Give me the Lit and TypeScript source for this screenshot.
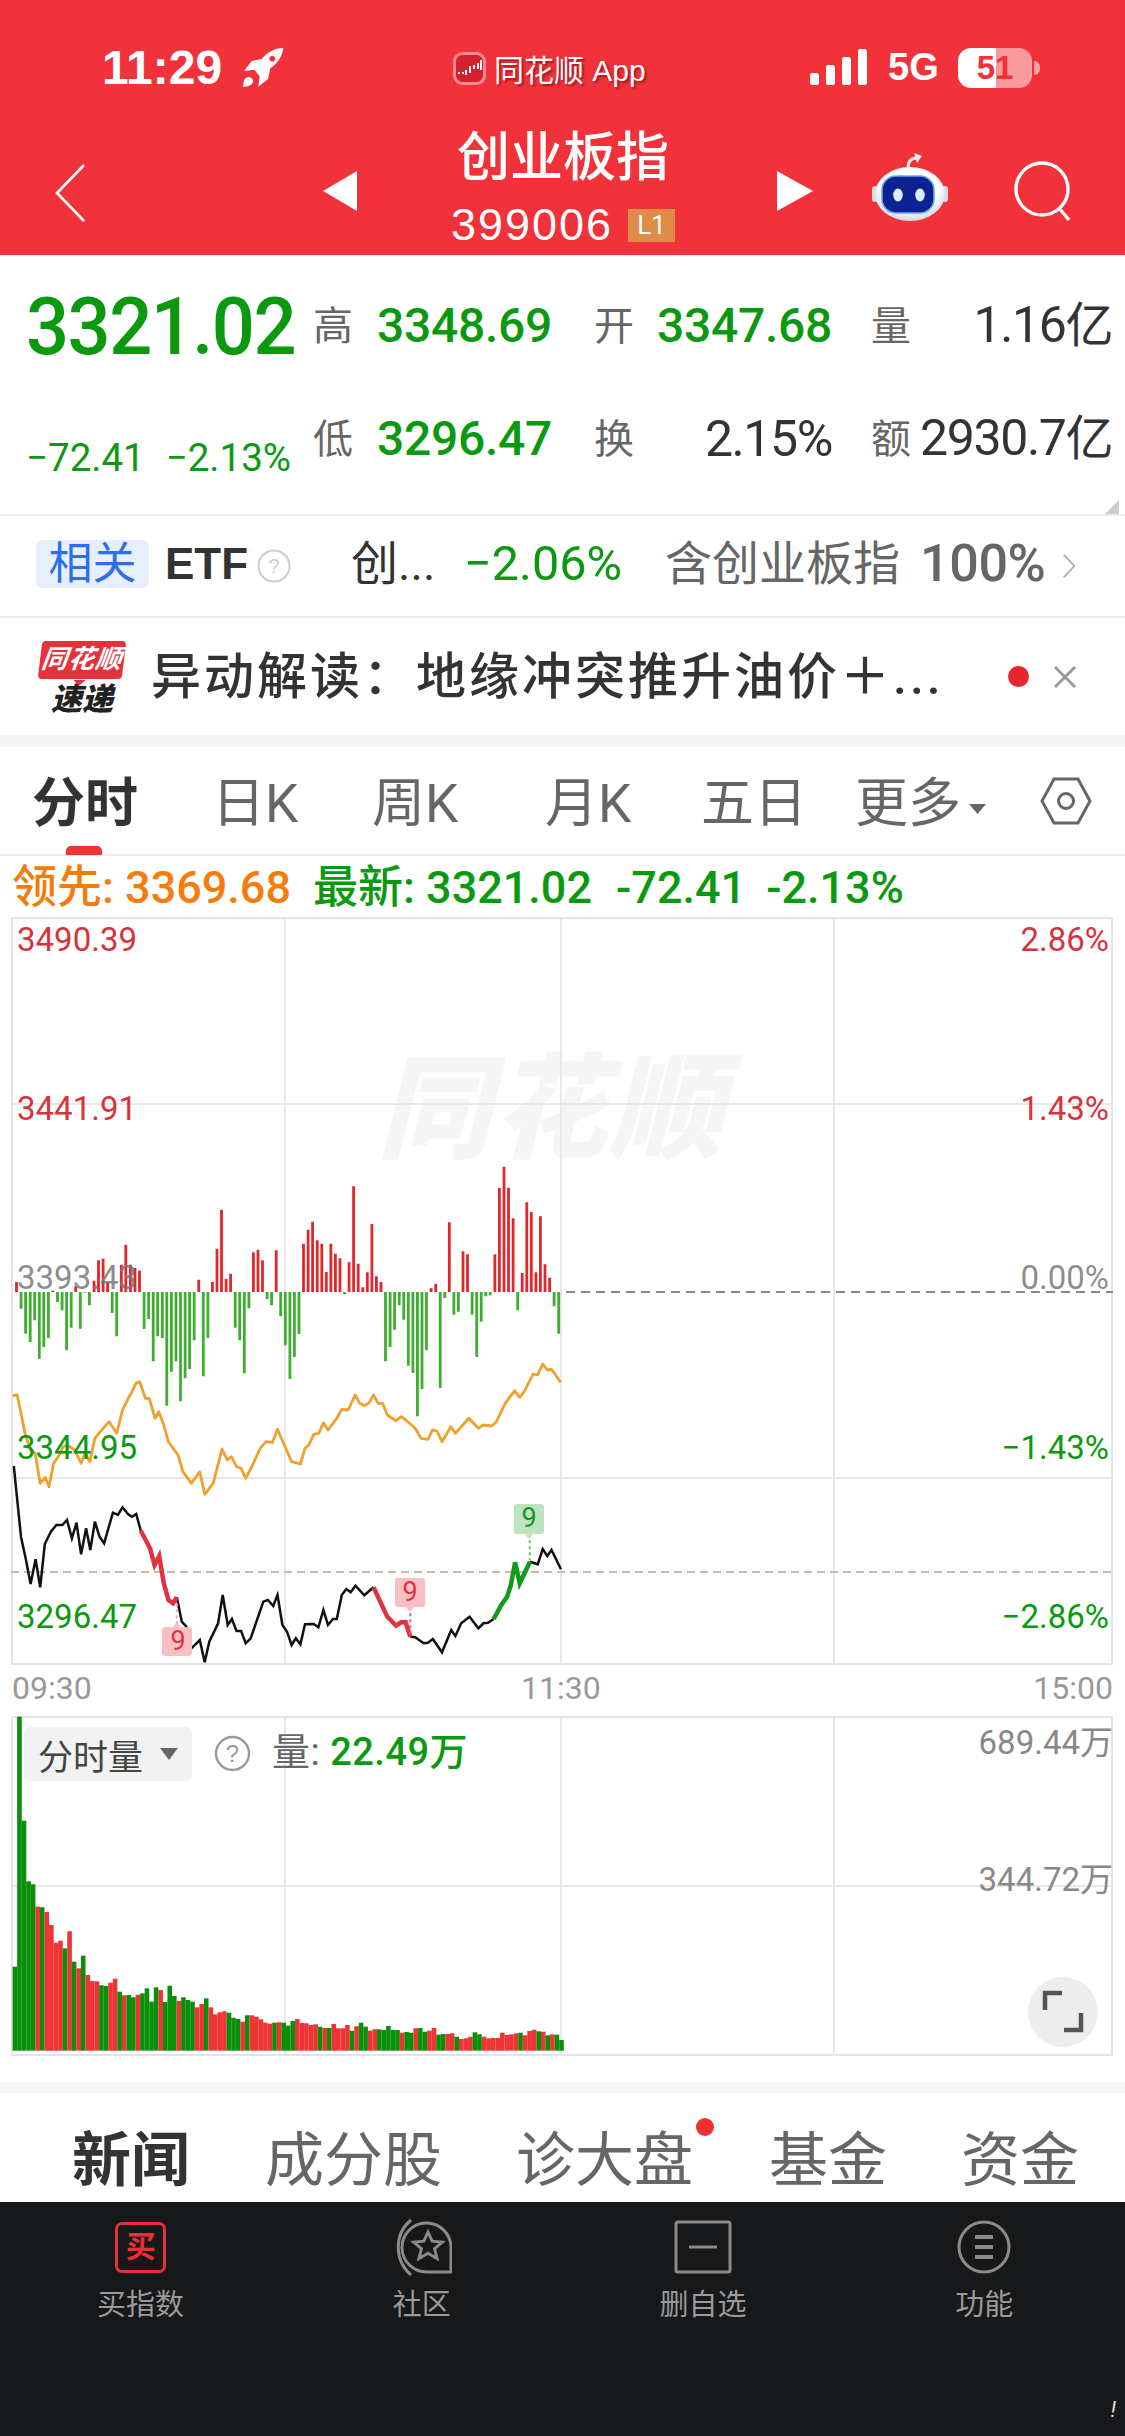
import { LitElement, html, css, svg } from 'lit';
import { customElement } from 'lit/decorators.js';

// all chart data below was read off the reference, in px of the crop (x / 2.613, y / 3)
const ticks = [30,-50,-125,-150,-85,-200,-165,-138,4,-30,-55,-175,-107,17,-110,-2,-40,34,95,100,30,-63,-133,82,142,82,72,64,-111,-81,-208,-133,-138,-341,-239,-208,-328,-259,-231,-145,37,-253,-138,30,130,247,39,55,-107,-145,-244,-49,119,127,95,-21,-40,125,-73,-160,-261,-195,-126,145,187,211,155,145,60,145,115,101,-6,89,317,85,14,59,204,47,30,-208,-165,-113,-40,-83,-221,-243,-373,-291,-175,11,25,-288,-18,209,-68,-59,122,113,-68,-195,-89,-13,-10,113,312,376,313,221,-55,57,269,240,59,227,83,43,-43,-125];

const volG = 'g', volR = 'r';
const vols: [string, number][] = [[volG,800],[volG,50],[volG,362],[volG,544],[volG,553],[volR,620],[volG,622],[volR,636],[volR,675],[volR,728],[volR,722],[volG,745],[volR,694],[volG,785],[volR,805],[volG,767],[volR,825],[volR,843],[volR,844],[volG,856],[volG,858],[volR,848],[volR,836],[volG,875],[volR,886],[volG,885],[volG,892],[volR,884],[volG,880],[volG,865],[volG,905],[volG,862],[volR,870],[volG,906],[volG,857],[volG,888],[volR,903],[volG,892],[volG,900],[volG,905],[volR,922],[volR,912],[volG,895],[volR,922],[volR,943],[volR,937],[volR,934],[volG,938],[volG,953],[volG,957],[volR,965],[volG,946],[volR,946],[volR,950],[volR,958],[volR,968],[volR,971],[volG,968],[volR,967],[volG,968],[volG,977],[volG,963],[volR,957],[volR,969],[volR,970],[volR,975],[volR,973],[volG,980],[volR,984],[volG,984],[volR,972],[volR,985],[volR,985],[volR,975],[volG,992],[volR,979],[volG,968],[volG,980],[volR,992],[volR,988],[volG,988],[volG,990],[volG,978],[volG,990],[volG,990],[volR,998],[volG,996],[volG,998],[volR,985],[volG,984],[volG,995],[volR,992],[volR,984],[volG,1004],[volG,1002],[volR,1002],[volR,1000],[volG,1010],[volR,1017],[volR,1015],[volR,1010],[volG,997],[volG,1003],[volR,1010],[volR,1015],[volR,1014],[volR,1014],[volR,998],[volR,1005],[volR,1003],[volR,1000],[volG,998],[volR,1006],[volR,993],[volR,989],[volG,994],[volR,995],[volG,1006],[volR,1003],[volG,1004],[volG,1020]];

const avgLine = [[33,-13],[45,-15],[55,40],[65,100],[80,150],[92,160],[105,250],[118,232],[128,260],[140,190],[155,165],[165,140],[175,135],[195,150],[212,190],[222,160],[235,185],[248,115],[262,95],[285,65],[305,100],[320,30],[335,-5],[345,-25],[355,-50],[365,-55],[380,-5],[390,-5],[405,55],[415,35],[428,75],[440,125],[465,165],[478,215],[500,250],[522,215],[535,283],[557,250],[580,147],[594,180],[605,170],[618,200],[630,205],[642,235],[660,195],[680,145],[695,125],[712,127],[725,88],[745,140],[762,185],[785,192],[797,145],[807,135],[820,103],[833,100],[845,68],[857,90],[880,55],[893,28],[910,30],[928,-15],[940,10],[953,17],[965,8],[976,-15],[988,10],[1000,10],[1012,45],[1035,62],[1048,50],[1060,60],[1085,85],[1100,115],[1118,118],[1130,90],[1142,93],[1155,125],[1178,80],[1190,100],[1225,55],[1250,85],[1262,75],[1285,78],[1297,65],[1320,10],[1345,-28],[1358,-8],[1370,-25],[1393,-78],[1405,-75],[1418,-108],[1430,-90],[1441,-92],[1465,-53]];

const priceA = [[36,198],[55,410],[68,480],[80,552],[93,478],[105,562],[117,432],[133,395],[147,375],[163,375],[175,360],[188,415],[200,368],[212,463],[225,385],[236,450],[248,365],[260,410],[272,430],[295,338],[308,345],[320,322],[335,343],[345,350],[356,342],[368,392]];
const priceDown1 = [[368,392],[392,445],[404,495],[416,468],[428,550],[440,600],[452,610],[462,592]];
const priceB = [[462,592],[475,665],[487,680],[500,745],[522,720],[535,787],[547,725],[570,670],[582,585],[595,675],[606,657],[618,693],[630,693],[642,730],[655,715],[688,605],[700,600],[714,618],[725,585],[738,675],[750,695],[762,735],[773,715],[785,733],[797,673],[820,672],[832,682],[845,630],[857,675],[870,657],[880,657],[893,585],[905,567],[916,577],[929,557],[952,586],[976,562]];
const priceDown2 = [[976,562],[1012,650],[1035,677],[1048,667],[1060,667],[1072,710]];
const priceC = [[1072,710],[1085,712],[1107,730],[1118,728],[1131,717],[1155,757],[1179,690],[1190,708],[1205,670],[1227,650],[1250,685],[1263,670],[1275,668],[1290,657]];
const priceUp = [[1290,657],[1310,615],[1325,590],[1335,555],[1346,487],[1358,550],[1385,485]];
const priceD = [[1385,485],[1405,493],[1418,447],[1430,468],[1441,450],[1466,508]];

const sx = (x: number) => +(x / 2.613 - 11).toFixed(1);
const sy = (y: number) => +(y / 3 + 483).toFixed(1);
const pts = (a: number[][]) => a.map(p => `${sx(p[0])},${sy(p[1])}`).join(' ');

const tickPath = (up: boolean) =>
  ticks.map((v, i) => ((v > 0) === up ? `M${(5.5 + 4.556 * i).toFixed(1)} 375V${(375 - v / 3).toFixed(1)}` : '')).join('');

const priceLabels = [
  { t: '3490.39', c: 'red', y: 23 }, { t: '3441.91', c: 'red', y: 192 },
  { t: '3393.43', c: 'flat', y: 361 }, { t: '3344.95', c: 'green', y: 531 },
  { t: '3296.47', c: 'green', y: 700 },
];
const pctLabels = [
  { t: '2.86%', c: 'red', y: 23 }, { t: '1.43%', c: 'red', y: 192 },
  { t: '0.00%', c: 'flat', y: 361 }, { t: '−1.43%', c: 'green', y: 531 },
  { t: '−2.86%', c: 'green', y: 700 },
];
const nines = [
  { c: 'red', x: 152, y: 710 }, { c: 'red', x: 384, y: 661 }, { c: 'green', x: 503, y: 587 },
];

@customElement('app-root')
export class AppRoot extends LitElement {
  static styles = css`
    :host {
      display: block;
      width: 1125px;
      height: 2436px;
      overflow: hidden;
      background: #fff;
      font-family: Roboto, "Noto Sans CJK SC", sans-serif;
      color: #333;
    }
    .header { height: 255px; background: #f1323a; color: #fff; display: flex; flex-direction: column; }
    .status { height: 128px; display: flex; align-items: flex-start; padding-top: 46px; box-sizing: border-box; }
    .time { font: 700 48px "Liberation Sans", sans-serif; margin-left: 102px; width: 141px; line-height: 44px; }
    .rocket { width: 41px; height: 41px; display: block; margin-top: 1px; }
    .app { display: flex; align-items: center; margin-left: 169px; height: 44px; width: 357px; }
    .app-logo { width: 33px; height: 33px; display: block; }
    .app-name { margin-left: 8px; font-size: 30px; font-family: "Liberation Sans", "Noto Sans CJK SC", sans-serif; text-shadow: 2px 2px 2px rgba(110, 0, 10, 0.55); white-space: nowrap; }
    .signal { width: 58px; height: 36px; display: block; margin-top: 3px; }
    .net { font: 700 38px "Liberation Sans", sans-serif; margin-left: 20px; width: 70px; line-height: 42px; }
    .battery {
      width: 74px; height: 40px; border-radius: 13px; margin-top: 2px;
      background: linear-gradient(90deg, #fff 51%, rgba(255, 255, 255, 0.5) 51%);
      color: #f1323a; font: 700 33px "Liberation Sans", sans-serif; text-align: center; line-height: 40px;
    }
    .tip { width: 6px; height: 14px; margin: 15px 0 0 2px; border-radius: 0 6px 6px 0; background: rgba(255, 255, 255, 0.55); }

    .nav { display: flex; align-items: flex-start; }
    .back { width: 34px; height: 60px; margin: 35px 0 0 54px; display: block; }
    .prev { width: 34px; height: 40px; margin: 43px 0 0 235px; display: block; }
    .title { width: 412px; display: flex; flex-direction: column; align-items: center; }
    .name { font-size: 53px; font-weight: 500; line-height: 56px; margin-top: 2px; }
    .code-row { display: flex; align-items: center; margin-top: 22px; height: 34px; }
    .code { font-size: 45px; letter-spacing: 2px; font-family: "Liberation Sans", sans-serif; }
    .level { width: 47px; height: 33px; margin-left: 15px; background: #e08c48; font-size: 26px; text-align: center; line-height: 33px; }
    .next { width: 36px; height: 40px; margin: 43px 0 0 8px; display: block; }
    .robot { width: 100px; height: 85px; margin: 22px 0 0 47px; display: block; }
    .search { width: 62px; height: 62px; margin: 32px 0 0 52px; display: block; }

    .quote {
      position: relative; height: 259px; box-sizing: border-box; padding: 13px 0 20px 27px;
      display: grid; grid-template-columns: 286px 40px 199px 82px 198px 79px 201px; grid-template-rows: 113px 113px;
      align-items: center;
    }
    .last { font-size: 79px; font-weight: 500; color: #0b990f; letter-spacing: -1.6px; line-height: 80px; transform: scaleX(0.96); transform-origin: left center; margin-top: 4px; margin-left: -1px; }
    .delta { align-self: end; display: flex; gap: 21px; font-size: 38.5px; color: #0b990f; padding-bottom: 18px; line-height: 36px; white-space: nowrap; margin-left: -1px; }
    .lab { font-size: 40px; color: #666; text-align: right; line-height: 48px; margin-top: 4px; }
    .val { font-size: 48px; font-weight: 500; color: #0b990f; text-align: right; line-height: 52px; letter-spacing: -0.3px; margin-top: 2px; }
    .val.dark { color: #333; font-weight: 400; font-size: 50px; letter-spacing: -1.4px; }
    .val.dark span { font-size: 48px; }
    .corner { position: absolute; right: 6px; bottom: 0; width: 14px; height: 14px; background: #ccc; clip-path: polygon(100% 0, 100% 100%, 0 100%); }

    .etf { height: 102px; box-sizing: border-box; border-top: 2px solid #eee; display: flex; align-items: center; padding-left: 36px; font-size: 47px; line-height: 56px; color: #666; }
    .etf div { margin-top: -4px; }
    .rel { width: 113px; height: 48px; background: #e8effc; color: #2c6fe8; border-radius: 6px; font-size: 44px; text-align: center; line-height: 48px; }
    .etf-name { color: #333; font-weight: 700; font-size: 44px; margin-left: 16px; font-family: "Liberation Sans", sans-serif; }
    .help { width: 34px; height: 34px; margin-left: 9px; display: block; }
    .fund { color: #333; margin-left: 60px; width: 113px; white-space: nowrap; font-size: 47px; }
    .fund-pct { color: #0b990f; font-size: 48.5px; width: 201px; white-space: nowrap; }
    .hold { white-space: nowrap; width: 255px; }
    .hold-pct { font-size: 52px; font-weight: 500; width: 142px; letter-spacing: -0.4px; }
    .more { width: 14px; height: 28px; display: block; }

    .flash { height: 119px; box-sizing: border-box; border-top: 2px solid #eee; display: flex; align-items: center; padding-left: 37px; }
    .speed { width: 90px; display: flex; flex-direction: column; align-items: center; margin-top: 4px; }
    .speed-top {
      position: relative; width: 84px; height: 38px; background: #e4323a; border-radius: 4px; transform: skewX(-7deg);
      color: #fff; font-size: 26px; font-weight: 700; font-style: italic; line-height: 37px; text-align: center; letter-spacing: 1px;
    }
    .speed-top::after { content: ""; position: absolute; left: 36px; bottom: -7px; border: 6px solid transparent; border-top-color: #e4323a; border-bottom: 0; }
    .speed-bot { font-size: 31px; font-weight: 900; font-style: italic; color: #222; line-height: 32px; margin-top: 5px; }
    .flash-text { font-size: 50px; letter-spacing: 3px; color: #333; font-weight: 500; margin-left: 24px; width: 857px; white-space: nowrap; line-height: 60px; }
    .dot { width: 21px; height: 21px; border-radius: 50%; background: #e9252e; }
    .close { width: 24px; height: 24px; margin-left: 24px; display: block; }

    .band { height: 12px; background: #f5f5f5; }
    .band.thin { height: 11px; }
    .tabs {
      height: 109px; box-sizing: border-box; border-bottom: 2px solid #eee; position: relative; padding: 27px 0 0 32px;
      display: grid; grid-template-columns: 180px 160px 173px 156px 154px 185px auto; font-size: 53px; line-height: 60px; color: #666; align-items: start;
    }
    .tabs .on { color: #333; font-weight: 700; }
    .tabs .caret { display: inline-block; width: 17px; height: 10px; margin-left: 8px; vertical-align: 8px; background: #666; clip-path: polygon(0 0, 100% 0, 50% 100%); }
    .hex { width: 52px; height: 48px; display: block; margin-top: 3px; }
    .underline { position: absolute; left: 66px; bottom: -1px; width: 36px; height: 9px; background: #ee3333; border-radius: 5px 5px 0 0; }

    .info { height: 61px; display: flex; align-items: baseline; padding: 7px 0 0 12px; box-sizing: border-box; font-size: 45px; line-height: 50px; font-weight: 500; white-space: nowrap; }
    .lead { color: #f57c0a; margin-right: 22px; }
    .now { color: #0b990f; margin-right: 24px; }
    .now2 { color: #0b990f; margin-right: 20px; }

    .frame { position: relative; margin-left: 11px; width: 1102px; height: 748px; }
    .frame svg, .vol svg { display: block; }
    .plot { position: absolute; left: 0; top: 0; }
    .wm { position: absolute; left: 366px; top: 133px; font-size: 114px; font-weight: 900; font-style: italic; color: #f5f5f5; letter-spacing: 2px; line-height: 120px; white-space: nowrap; }
    .ax { position: absolute; font-size: 33px; line-height: 36px; }
    .ax.l { left: 6px; }
    .ax.r { right: 4px; }
    .red { color: #d8323c; }
    .green { color: #0b990f; }
    .flat { color: rgba(120, 120, 120, 0.85); }
    .nine { position: absolute; width: 30px; height: 29px; text-align: center; font-size: 27px; line-height: 29px; }
    .nine.red { color: #e0333f; }
    .nine.green { color: #129a1c; }
    .hours { height: 51px; display: flex; justify-content: space-between; align-items: center; box-sizing: border-box; padding: 0 12px 6px 12px; font-size: 32px; color: #999; position: relative; }
    .hours .mid { position: absolute; left: 521px; }

    .vol { position: relative; margin-left: 11px; width: 1102px; height: 340px; }
    .pill { position: absolute; left: 13px; top: 11px; width: 168px; height: 54px; box-sizing: border-box; padding-left: 14px; background: #f2f2f2; border-radius: 6px; display: flex; align-items: center; font-size: 35px; color: #444; }
    .pill i { width: 18px; height: 12px; margin-left: 17px; background: #666; clip-path: polygon(0 0, 100% 0, 50% 100%); }
    .help2 { position: absolute; left: 203px; top: 19px; width: 37px; height: 37px; }
    .vol-now { position: absolute; left: 261px; top: 15px; font-size: 38px; line-height: 42px; color: #666; white-space: nowrap; letter-spacing: 0.5px; }
    .vol-now b { color: #0b990f; font-weight: 500; }
    .vol-ax { position: absolute; right: 0; font-size: 33px; line-height: 38px; color: #888; }
    .expand { position: absolute; left: 1017px; top: 261px; width: 70px; height: 70px; border-radius: 50%; background: #ededed; }
    .expand svg { width: 70px; height: 70px; }

    .gap { height: 26px; }
    .news { height: 109px; display: grid; grid-template-columns: 193px 251px 253px 192px auto; padding: 35px 0 0 72px; box-sizing: border-box; font-size: 59px; line-height: 66px; color: #666; position: relative; }
    .news .on { color: #333; font-weight: 700; }
    .news-dot { position: absolute; left: 696px; top: 25px; width: 18px; height: 18px; border-radius: 50%; background: #ee3030; }

    .bar { height: 234px; background: #171819; position: relative; display: grid; grid-template-columns: repeat(4, 1fr); padding-top: 16px; box-sizing: border-box; align-items: start; }
    .item { display: flex; flex-direction: column; align-items: center; color: #9a9a9a; font-size: 29px; }
    .item svg { display: block; width: 60px; height: 60px; }
    .item span { margin-top: 7px; line-height: 40px; }
    .buy { width: 51px; height: 51px; box-sizing: border-box; margin: 4px 0 5px; border: 3px solid #e8303a; border-radius: 7px; color: #e8303a; font-size: 30px; font-weight: 700; line-height: 44px; text-align: center; }
    .mark { position: absolute; right: 9px; bottom: 14px; color: #ddd; font-size: 22px; font-style: italic; }
  `;

  renderChart() {
    const cols = [274, 550, 823];
    return html`<svg class="plot" width="1102" height="748" viewBox="0 0 1102 748" fill="none">
      ${cols.map(x => svg`<line x1=${x} x2=${x} y1="0" y2="748" stroke="#e8e8e8" stroke-width="2"></line>`)}
      ${[187, 561].map(y => svg`<line x1="0" x2="1102" y1=${y} y2=${y} stroke="#e8e8e8" stroke-width="2"></line>`)}
      <rect x="1" y="1" width="1100" height="746" stroke="#e4e4e4" stroke-width="2"></rect>
      <line x1="555" x2="1102" y1="375" y2="375" stroke="#8a8a8a" stroke-width="2" stroke-dasharray="9 6"></line>
      <line x1="0" x2="1102" y1="655" y2="655" stroke="#cdbc9f" stroke-width="2" stroke-dasharray="8 5"></line>
      <path d=${tickPath(true)} stroke="#e2262b" stroke-width="2.8"></path>
      <path d=${tickPath(false)} stroke="#3fad30" stroke-width="2.8"></path>
      <polyline points=${pts(avgLine)} stroke="#f0a02c" stroke-width="2.8" stroke-linejoin="round"></polyline>
      <polyline points=${pts(priceA)} stroke="#111" stroke-width="2.5"></polyline>
      <polyline points=${pts(priceB)} stroke="#111" stroke-width="2.5"></polyline>
      <polyline points=${pts(priceC)} stroke="#111" stroke-width="2.5"></polyline>
      <polyline points=${pts(priceD)} stroke="#111" stroke-width="2.5"></polyline>
      <polyline points=${pts(priceDown1)} stroke="#e0333f" stroke-width="4.5"></polyline>
      <polyline points=${pts(priceDown2)} stroke="#e0333f" stroke-width="4.5"></polyline>
      <polyline points=${pts(priceUp)} stroke="#129a1c" stroke-width="4.5"></polyline>
      <line x1=${sx(462)} x2=${sx(462)} y1=${sy(610)} y2=${sy(682)} stroke="#f4aab0" stroke-width="2" stroke-dasharray="3 3"></line>
      <line x1=${sx(1072)} x2=${sx(1072)} y1=${sy(622)} y2=${sy(710)} stroke="#e8606a" stroke-width="2" stroke-dasharray="3 3"></line>
      <line x1=${sx(1384)} x2=${sx(1384)} y1=${sy(403)} y2=${sy(480)} stroke="#6fc07a" stroke-width="2" stroke-dasharray="3 3"></line>
      <path d="M155 710h8l4-5 4 5h8q3 0 3 3v23q0 3-3 3h-24q-3 0-3-3v-23q0-3 3-3z" transform="translate(-1 0)" fill="#f8c0c4"></path>
      <path d="M387 661h24q3 0 3 3v23q0 3-3 3h-8l-4 5-4-5h-8q-3 0-3-3v-23q0-3 3-3z" fill="#f8c0c4"></path>
      <path d="M506 587h24q3 0 3 3v24q0 3-3 3h-8l-4 5-4-5h-8q-3 0-3-3v-24q0-3 3-3z" fill="#bde3c0"></path>
    </svg>`;
  }

  renderVolume() {
    const base = 1052 / 3 - 16;
    return html`<svg class="plot" width="1102" height="340" viewBox="0 0 1102 340" fill="none">
      ${[274, 550, 823].map(x => svg`<line x1=${x} x2=${x} y1="0" y2="339" stroke="#e8e8e8" stroke-width="2"></line>`)}
      <line x1="0" x2="1102" y1="170" y2="170" stroke="#e8e8e8" stroke-width="2"></line>
      <rect x="1" y="1" width="1100" height="338" stroke="#e4e4e4" stroke-width="2"></rect>
      ${vols.map(([c, top], i) => {
        const y = top / 3 - 16;
        return svg`<rect x=${(1.6 + 4.555 * i).toFixed(2)} y=${y.toFixed(1)} width="4.6" height=${(base - y).toFixed(1)} fill=${c === volG ? '#0a8f0a' : '#ee3434'}></rect>`;
      })}
    </svg>`;
  }

  render() {
    return html`
      <div class="header">
        <div class="status">
          <div class="time">11:29</div>
          <svg class="rocket" viewBox="22 20 123 123">
            <path fill="#fff" fill-rule="evenodd" d="M143 22C118 24 93 36 78 56L48 62 25 92 56 88 72 108 68 139 97 116 104 84C126 68 140 48 143 22ZM110 46a9 9 0 1 0 .1 0Z"></path>
            <path fill="#fff" d="M32 112C22 118 24 128 22 140C36 138 48 136 52 124C54 116 42 106 32 112Z"></path>
          </svg>
          <div class="app">
            <svg class="app-logo" viewBox="0 0 33 33">
              <rect x="1.5" y="1.5" width="30" height="30" rx="8" fill="#d4202a" stroke="#f78a90" stroke-width="3"></rect>
              <path stroke="#fff" stroke-width="2" d="M5 21h2M9 21h2M13 18v5M17 14v7M21 13v4M25 11v6M28 8v10"></path>
            </svg>
            <span class="app-name">同花顺 App</span>
          </div>
          <svg class="signal" viewBox="0 0 58 36">
            <rect x="0" y="24" width="9" height="12" rx="2.5" fill="#fff"></rect>
            <rect x="16" y="16" width="9" height="20" rx="2.5" fill="#fff"></rect>
            <rect x="32" y="8" width="9" height="28" rx="2.5" fill="#fff"></rect>
            <rect x="48" y="0" width="9" height="36" rx="2.5" fill="#fff"></rect>
          </svg>
          <div class="net">5G</div>
          <div class="battery">51</div>
          <div class="tip"></div>
        </div>
        <div class="nav">
          <svg class="back" viewBox="0 0 34 60" fill="none"><path d="M30 2 3 30l27 28" stroke="#fff" stroke-width="2.6"></path></svg>
          <svg class="prev" viewBox="0 0 34 40"><path d="M34 0v40L0 20z" fill="#fff"></path></svg>
          <div class="title">
            <div class="name">创业板指</div>
            <div class="code-row"><span class="code">399006</span><span class="level">L1</span></div>
          </div>
          <svg class="next" viewBox="0 0 36 40"><path d="M0 0v40l36-20z" fill="#fff"></path></svg>
          <svg class="robot" viewBox="0 0 100 85">
            <defs>
              <radialGradient id="head" cx="50%" cy="40%" r="65%"><stop offset="0.6" stop-color="#fff"></stop><stop offset="1" stop-color="#c9ced8"></stop></radialGradient>
            </defs>
            <path d="M48 18c0-7 3-10 9-10" fill="none" stroke="#f4e8e8" stroke-width="3"></path>
            <path d="M54 3l8 3-5 7z" fill="#f4e8e8"></path>
            <rect x="12" y="36" width="6" height="16" rx="3" fill="#d8dbe2"></rect>
            <rect x="82" y="36" width="6" height="16" rx="3" fill="#d8dbe2"></rect>
            <ellipse cx="50" cy="44" rx="35" ry="27" fill="url(#head)"></ellipse>
            <rect x="22" y="26" width="52" height="37" rx="14" fill="#0b2392" stroke="#6aa8ee" stroke-width="1.5"></rect>
            <ellipse cx="38" cy="45" rx="4.8" ry="6.5" fill="#d8eefc"></ellipse>
            <ellipse cx="60" cy="45" rx="4.8" ry="6.5" fill="#d8eefc"></ellipse>
          </svg>
          <svg class="search" viewBox="0 0 62 62" fill="none"><circle cx="30" cy="29" r="26" stroke="#fff" stroke-width="3.4"></circle><path d="M47 48l10 12" stroke="#fff" stroke-width="3.4"></path></svg>
        </div>
      </div>

      <div class="quote">
        <div class="last">3321.02</div>
        <div class="lab">高</div><div class="val">3348.69</div>
        <div class="lab">开</div><div class="val">3347.68</div>
        <div class="lab">量</div><div class="val dark">1.16<span>亿</span></div>
        <div class="delta"><span>−72.41</span><span>−2.13%</span></div>
        <div class="lab">低</div><div class="val">3296.47</div>
        <div class="lab">换</div><div class="val dark">2.15%</div>
        <div class="lab">额</div><div class="val dark">2930.7<span>亿</span></div>
        <div class="corner"></div>
      </div>

      <div class="etf">
        <div class="rel">相关</div>
        <div class="etf-name">ETF</div>
        <svg class="help" viewBox="0 0 34 34" fill="none"><circle cx="17" cy="17" r="15.5" stroke="#ccc" stroke-width="2"></circle><text x="17" y="24" text-anchor="middle" font-size="20" fill="#ccc" font-family="Liberation Sans">?</text></svg>
        <div class="fund">创...</div>
        <div class="fund-pct">−2.06%</div>
        <div class="hold">含创业板指</div>
        <div class="hold-pct">100%</div>
        <svg class="more" viewBox="0 0 16 30" fill="none"><path d="M2 2l12 13L2 28" stroke="#aaa" stroke-width="2"></path></svg>
      </div>

      <div class="flash">
        <div class="speed">
          <div class="speed-top">同花顺</div>
          <div class="speed-bot">速递</div>
        </div>
        <div class="flash-text">异动解读：地缘冲突推升油价＋...</div>
        <div class="dot"></div>
        <svg class="close" viewBox="0 0 24 24" fill="none"><path d="M2 2l20 20M22 2 2 22" stroke="#9a9a9a" stroke-width="3"></path></svg>
      </div>

      <div class="band"></div>

      <div class="tabs">
        <span class="on">分时</span><span>日K</span><span>周K</span><span>月K</span><span>五日</span>
        <span>更多<i class="caret"></i></span>
        <svg class="hex" viewBox="0 0 52 48" fill="none"><path d="M14 2h24l12 22-12 22H14L2 24z" stroke="#666" stroke-width="3"></path><circle cx="26" cy="24" r="7.5" stroke="#666" stroke-width="3"></circle></svg>
        <div class="underline"></div>
      </div>

      <div class="info">
        <span class="lead">领先: 3369.68</span>
        <span class="now">最新: 3321.02</span>
        <span class="now2">-72.41</span>
        <span class="now2">-2.13%</span>
      </div>

      <div class="frame">
        <div class="wm">同花顺</div>
        ${this.renderChart()}
        ${priceLabels.map(l => html`<span class="ax l ${l.c}" style="top:${l.y - 18}px">${l.t}</span>`)}
        ${pctLabels.map(l => html`<span class="ax r ${l.c}" style="top:${l.y - 18}px">${l.t}</span>`)}
        ${nines.map(n => html`<span class="nine ${n.c}" style="left:${n.x}px;top:${n.y}px">9</span>`)}
      </div>

      <div class="hours"><span>09:30</span><span class="mid">11:30</span><span>15:00</span></div>

      <div class="vol">
        ${this.renderVolume()}
        <div class="pill">分时量<i></i></div>
        <svg class="help2" viewBox="0 0 37 37" fill="none"><circle cx="18.5" cy="18.5" r="16.5" stroke="#999" stroke-width="2.4"></circle><text x="18.5" y="27" text-anchor="middle" font-size="24" fill="#999" font-family="Liberation Sans">?</text></svg>
        <div class="vol-now">量: <b>22.49万</b></div>
        <div class="vol-ax" style="top:8px">689.44万</div>
        <div class="vol-ax" style="top:145px">344.72万</div>
        <div class="expand">
          <svg viewBox="0 0 70 70" fill="none"><path d="M17 33V16h17M53 36v17H36" stroke="#555" stroke-width="4.5"></path></svg>
        </div>
      </div>

      <div class="gap"></div>
      <div class="band thin"></div>

      <div class="news">
        <span class="on">新闻</span><span>成分股</span><span>诊大盘</span><span>基金</span><span>资金</span>
        <div class="news-dot"></div>
      </div>

      <div class="bar">
        <div class="item"><div class="buy">买</div><span>买指数</span></div>
        <div class="item">
          <svg viewBox="0 0 60 60" fill="none" stroke="#8a8a8a" stroke-width="3">
            <path d="M60 55H36A24.5 24.5 0 1 1 60 30Z" transform="translate(-1 -1)"></path>
            <path d="M19 2C2 16 2 42 19 57"></path>
            <path d="M36 14l4.2 9.2 10 .9-7.6 6.6 2.4 9.8L36 35.3l-9 5.2 2.4-9.8-7.6-6.6 10-.9z"></path>
          </svg>
          <span>社区</span>
        </div>
        <div class="item">
          <svg viewBox="0 0 60 60" fill="none" stroke="#8a8a8a" stroke-width="3">
            <rect x="3" y="4" width="54" height="50" rx="2"></rect>
            <path d="M16 29h28"></path>
          </svg>
          <span>删自选</span>
        </div>
        <div class="item">
          <svg viewBox="0 0 60 60" fill="none" stroke="#8a8a8a" stroke-width="3">
            <circle cx="30" cy="29" r="25"></circle>
            <path d="M21 19h18M21 29h18M21 39h18" stroke-width="4"></path>
          </svg>
          <span>功能</span>
        </div>
        <div class="mark">!</div>
      </div>
    `;
  }
}
